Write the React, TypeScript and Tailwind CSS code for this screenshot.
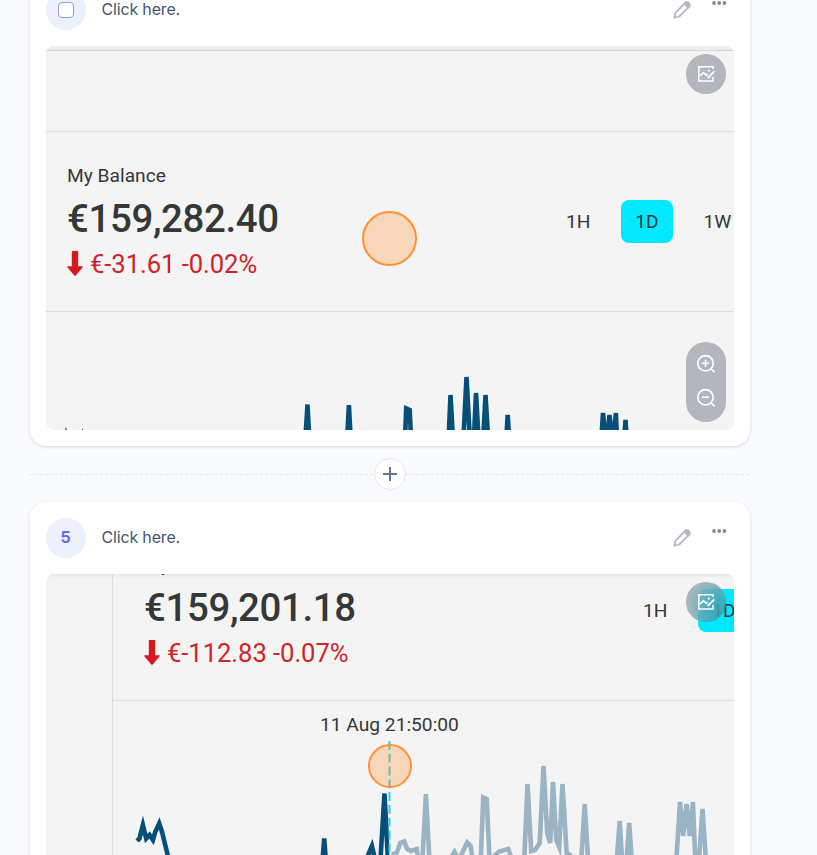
import React from "react";

const roboto = "font-['Roboto','Liberation_Sans',sans-serif]";

const linePoints =
  "0,267 2.3,264.3 5.7,251 9,264.5 12.3,261 15.7,266 18,258 22,249.5 24.7,257.5 31,283 60,330 182,330 187,264.5 192,330 227,290 234.7,272 239,290 243,290 247.3,219.5 252,310 256.3,280 259.5,279 263,269 267,267.5 270,275 274,277 279.5,275 282,290 285,290 288.7,220 293,300 310,290 317.3,278 321,285 324,281 330,268.5 333.5,272 336,290 343,300 346,223.5 349.5,225 353,300 357,282 362,277.5 371,275 374,283 378,310 386,310 390.3,210 394,277 398,276 402.5,269 406.3,192 410,259 413,269 415.8,208 419,266 422,273 425.3,210 429.5,279 433,281 442,320 447.5,230 453,320 477,320 482.5,247 487,320 492,249 497,320 537,320 542.8,228 546,262 549.3,230 552.5,262 555.7,228 559.5,320 565.3,235 571,320";

function BalanceChart({ cursor }: { cursor?: boolean }) {
  return (
    <svg width="700" height="330" viewBox="0 0 700 330" className="block shrink-0 overflow-visible">
      <g transform="translate(14.2 -127)" fill="none" strokeWidth="4.6" strokeLinejoin="miter" strokeMiterlimit="5">
        {!cursor && <polyline points={linePoints} stroke="#054f79" />}
        {cursor && (
          <>
            <clipPath id="dark-part">
              <rect x="-4" y="100" width="256" height="400" />
            </clipPath>
            <clipPath id="light-part">
              <rect x="252" y="100" width="460" height="400" />
            </clipPath>
            <polyline points={linePoints} stroke="#054f79" clipPath="url(#dark-part)" />
            <polyline points={linePoints} stroke="#9bb4c4" clipPath="url(#light-part)" />
            <line x1="252.3" y1="167" x2="252.3" y2="400" stroke="#2bd0da" strokeWidth="2" strokeDasharray="8.8 4" />
          </>
        )}
      </g>
    </svg>
  );
}

function DownArrow() {
  return (
    <svg width="16" height="25" viewBox="0 0 16 25" className="-mt-[1px] shrink-0" fill="#d5191c">
      <path d="M4.8 0.8 Q4.8 0 5.6 0H10.4Q11.2 0 11.2 0.8V15.3H15.2Q16.2 15.6 15.5 16.5L8.7 24.5Q8 25.2 7.3 24.5L0.5 16.5Q-0.2 15.6 0.8 15.3H4.8Z" />
    </svg>
  );
}

function Balance({ amount, change, cursor }: { amount: string; change: string; cursor?: boolean }) {
  return (
    <div className={`w-[760px] shrink-0 text-[#343837] ${roboto}`}>
      <section className="flex h-[181px] border-y border-[#dedede] pt-[32px] pl-[21px]">
        <div className="w-[501px] whitespace-nowrap">
          <div className="h-[24px] text-[19.2px] leading-[24px]">My Balance</div>
          <div className="h-[61px] pt-[6px] text-[38.4px] leading-[50px] font-medium tracking-[-0.35px]">{amount}</div>
          <div className="flex h-[30px] items-center gap-[7px] text-[25.6px] leading-[30px] tracking-[-0.05px] text-[#cf2427]">
            <DownArrow />
            <span>{change}</span>
          </div>
        </div>
        <div className="mt-[36px] flex h-[43px] text-[19.2px] leading-[43px]">
          <span className="-ml-[2px] w-[55px] shrink-0">1H</span>
          <span className="w-[52px] shrink-0 rounded-[8px] bg-[#00e8ff] text-center">1D</span>
          <span className="ml-[30.5px]">1W</span>
        </div>
      </section>
      <BalanceChart cursor={cursor} />
    </div>
  );
}

function PencilIcon() {
  return (
    <svg width="18" height="18" viewBox="0 0 18 18" fill="none" stroke="#b3bac5" strokeWidth="1.8" strokeLinejoin="round">
      <path d="M1.3 16.7 2.4 11.8 12.2 2 Q14 0.4 15.8 2.1 Q17.5 3.9 16 5.7 L6.2 15.5Z" />
      <path d="M11.4 2.8 12.2 2Q14 .4 15.8 2.1Q17.5 3.9 16 5.7L15.2 6.5Z" fill="#a9b2be" />
    </svg>
  );
}

function EditImageIcon() {
  return (
    <svg width="20" height="20" viewBox="0 0 20 20" fill="none" stroke="#fff" strokeWidth="1.6">
      <path d="M17 5V2.8H2.8V17H17V13" />
      <path d="M4.2 12 7.4 8.6 10.2 11.4 11.6 10" />
      <path d="M11.6 14 18.4 7.3" strokeWidth="1.8" />
      <circle cx="12.8" cy="6.6" r="1.1" fill="#fff" stroke="none" />
    </svg>
  );
}

function ZoomIcon({ plus }: { plus?: boolean }) {
  return (
    <svg width="20" height="20" viewBox="0 0 20 20" fill="none" stroke="#fff" strokeWidth="1.6">
      <circle cx="9.5" cy="9.3" r="7.7" />
      <path d="M14.9 14.7 18.6 18.4M6 9.3H13" />
      {plus && <path d="M9.5 5.8V12.8" />}
    </svg>
  );
}

function StepHeader({ badge }: { badge: React.ReactNode }) {
  return (
    <header className="flex h-10 items-center font-['Inter','Liberation_Sans',sans-serif]">
      <div className="flex size-10 items-center justify-center rounded-full bg-[#edf1ff] text-[16px] font-bold text-[#656af0]">
        {badge}
      </div>
      <span className="ml-[15.5px] pb-[2px] text-[16px] tracking-[-0.17px] text-[#475569]">Click here.</span>
      <div className="ml-auto flex items-center gap-[20px] pr-[6px]">
        <PencilIcon />
        <svg width="17" height="6" viewBox="0 0 17 6" fill="#838d9c" className="-mt-[14px]">
          <circle cx="3" cy="3" r="1.9" />
          <circle cx="8.2" cy="3" r="1.9" />
          <circle cx="13.4" cy="3" r="1.9" />
        </svg>
      </div>
    </header>
  );
}

function EditButton() {
  return (
    <button className="absolute top-2 right-2 flex size-10 items-center justify-center rounded-full bg-[#727a85]/50 backdrop-blur-[9px]">
      <EditImageIcon />
    </button>
  );
}

const card = "h-[472px] rounded-2xl bg-white p-4 shadow-[0_1px_3px_rgba(30,41,80,0.17)]";
const panel = "relative mt-4 h-[384px] overflow-hidden rounded-lg bg-[#f4f4f4]";

export default function App() {
  return (
    <div className="h-[855px] w-[817px] overflow-hidden bg-[#f9fafc]">
      <main className="-mt-[26px] ml-[30px] w-[720px]">
        <article className={card}>
          <StepHeader badge={<span className="size-4 rounded-[4px] border border-[#94a3b8] bg-white" />} />
          <div className={panel}>
            <div className="h-[5px] border-b border-[#d6d6d6] bg-[#eeeeee]" />
            <div className="h-[80px]" />
            <Balance amount="€159,282.40" change="€-31.61 -0.02%" />
            <div className="absolute top-[165px] left-[316px] size-[55px] rounded-full border-2 border-[#ff9132] bg-[#ff9132]/30" />
            <EditButton />
            <div className="absolute right-2 bottom-2 flex h-20 w-10 flex-col items-center justify-center gap-[14px] rounded-full bg-[#727a85]/50 pb-[2px]">
              <ZoomIcon plus />
              <ZoomIcon />
            </div>
          </div>
        </article>

        <div className="flex h-14 items-center">
          <DashedRule />
          <button className="flex size-8 items-center justify-center rounded-full border border-[#e2e8f0] bg-white">
            <svg width="14" height="14" viewBox="0 0 14 14" stroke="#64748b" strokeWidth="2">
              <path d="M7 0V14M0 7H14" />
            </svg>
          </button>
          <DashedRule />
        </div>

        <article className={card}>
          <StepHeader badge={<span className="pr-[1px] pb-[2px]">5</span>} />
          <div className={panel}>
            <div className="flex h-[384px]">
              <div className="w-[67px] shrink-0 border-r border-[#dedede]" />
              <div className="-mt-[54px] pl-[10px] shadow-[inset_0_180px_0_#f4f4f4,inset_0_181px_0_#dedede]">
                <Balance amount="€159,201.18" change="€-112.83 -0.07%" cursor />
              </div>
            </div>
            <div className={`absolute top-[139px] left-[274px] text-[19.2px] leading-6 whitespace-nowrap text-[#343837] ${roboto}`}>
              11 Aug 21:50:00
            </div>
            <div className="absolute inset-x-0 top-0 h-1 bg-linear-to-b from-black/5 to-transparent" />
            <div className="absolute top-[170px] left-[322px] size-[44px] rounded-full border-2 border-[#ff9132] bg-[#ff9132]/30" />
            <EditButton />
          </div>
        </article>
      </main>
    </div>
  );
}

function DashedRule() {
  return <div className="h-px flex-1 bg-[repeating-linear-gradient(90deg,#e2e8f0_0_3px,transparent_3px_5px)]" />;
}
